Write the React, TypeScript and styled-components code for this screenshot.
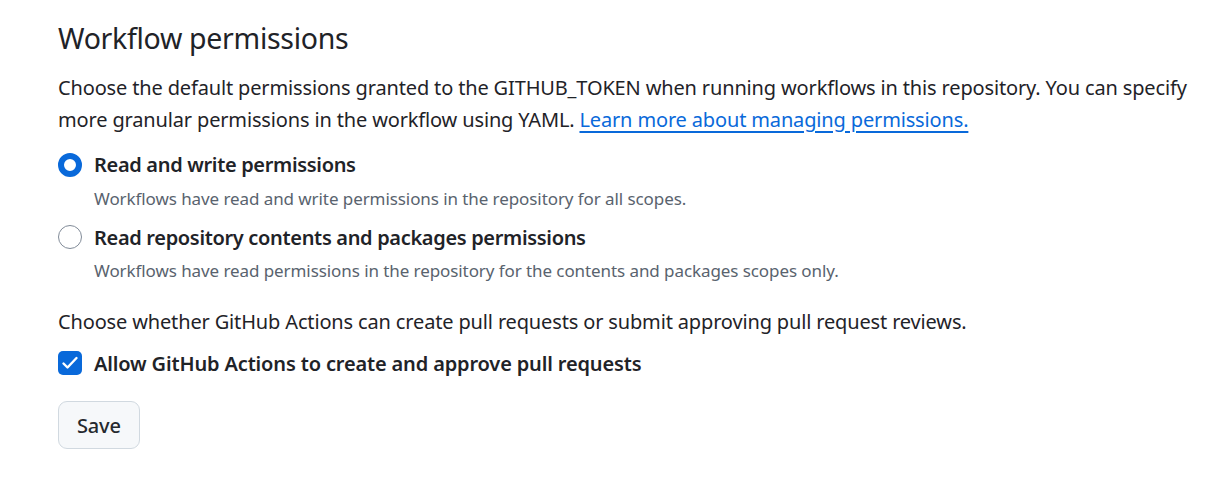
import React from 'react'
import styled, { createGlobalStyle } from 'styled-components'

const GlobalStyle = createGlobalStyle`
  body {
    margin: 0;
    background: #ffffff;
    color: #1f2328;
    font-family: 'Noto Sans', 'Liberation Sans', sans-serif;
    -webkit-font-smoothing: antialiased;
  }
`

const Page = styled.div`
  padding: 16px 0 0 58px;
  width: 1140px;
`

const Heading = styled.h2`
  margin: 0 0 11px;
  font-size: 28.5px;
  font-weight: 400;
  letter-spacing: -0.3px;
  line-height: 45px;
`

const Para = styled.p`
  margin: 0;
  font-size: 20px;
  letter-spacing: -0.15px;
  line-height: 31.5px;
`

const Link = styled.a`
  color: #0969da;
  text-decoration: underline;
  text-underline-offset: 4px;
  text-decoration-thickness: 2px;
  cursor: pointer;
`

const Options = styled.div`
  display: flex;
  flex-direction: column;
  gap: 10px;
  margin: 14px 0 22px;
`

const Option = styled.label`
  display: grid;
  grid-template-columns: 24px 1fr;
  column-gap: 12px;
  row-gap: 4px;
  align-items: center;
`

const Radio = styled.span<{ checked?: boolean }>`
  box-sizing: border-box;
  width: 24px;
  height: 24px;
  border-radius: 50%;
  border: ${(p) => (p.checked ? '6.5px solid #0969da' : '1.5px solid #818b98')};
  background: #ffffff;
`

const Check = styled.span`
  box-sizing: border-box;
  width: 24px;
  height: 24px;
  border-radius: 5px;
  background: #0969da;
  display: flex;
  align-items: center;
  justify-content: center;
`

const Label = styled.span<{ wide?: boolean }>`
  font-size: 20px;
  font-weight: 600;
  letter-spacing: ${(p) => (p.wide ? '-0.15px' : '-0.33px')};
  line-height: 31.5px;
`

const Desc = styled.span`
  grid-column: 2;
  font-size: 17px;
  letter-spacing: -0.08px;
  line-height: 27px;
  color: #59636e;
`

const CheckRow = styled(Option)`
  margin: 10px 0 22px;
`

const Button = styled.button`
  box-sizing: border-box;
  height: 48px;
  padding: 0 18px;
  font-family: inherit;
  font-size: 20px;
  font-weight: 500;
  letter-spacing: -0.2px;
  color: #25292e;
  background: #f6f8fa;
  border: 1.5px solid #d1d9e0;
  border-radius: 9px;
  cursor: pointer;
`

export default function App() {
  return (
    <Page>
      <GlobalStyle />
      <Heading>Workflow permissions</Heading>
      <Para>
        Choose the default permissions granted to the GITHUB_TOKEN when running workflows in this repository. You can
        specify more granular permissions in the workflow using YAML. <Link>Learn more about managing permissions.</Link>
      </Para>
      <Options>
        <Option>
          <Radio checked />
          <Label>Read and write permissions</Label>
          <Desc>Workflows have read and write permissions in the repository for all scopes.</Desc>
        </Option>
        <Option>
          <Radio />
          <Label>Read repository contents and packages permissions</Label>
          <Desc>Workflows have read permissions in the repository for the contents and packages scopes only.</Desc>
        </Option>
      </Options>
      <Para>Choose whether GitHub Actions can create pull requests or submit approving pull request reviews.</Para>
      <CheckRow>
        <Check>
          <svg width="20" height="20" viewBox="0 0 20 20" fill="none">
            <path d="M3.5 10.5l4 4 9-9.5" stroke="#ffffff" strokeWidth="2.4" strokeLinecap="round" strokeLinejoin="round" />
          </svg>
        </Check>
        <Label wide>Allow GitHub Actions to create and approve pull requests</Label>
      </CheckRow>
      <Button>Save</Button>
    </Page>
  )
}
